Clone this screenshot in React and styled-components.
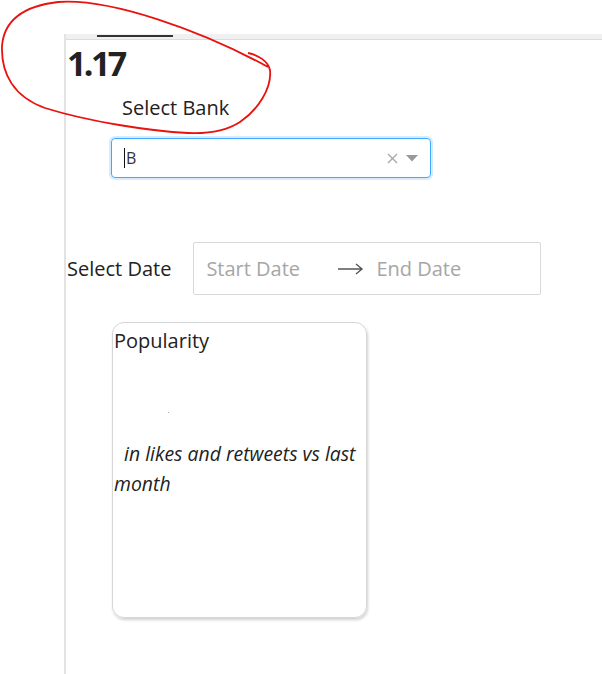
import React from "react";
import styled, { createGlobalStyle } from "styled-components";

const GlobalStyle = createGlobalStyle`
  html, body {
    margin: 0;
    padding: 0;
    background: #fff;
  }
  body {
    font-family: "Open Sans", "Noto Sans", sans-serif;
    color: #222;
  }
`;

const Page = styled.div`
  position: relative;
  padding: 34px 0 0 64px;
  min-height: 640px;
`;

const Main = styled.main`
  border-left: 2px solid #e3e3e3;
  min-height: 640px;
`;

const TopBand = styled.div`
  display: flex;
  height: 5px;
  background: #f0f0f0;
  border-bottom: 1px solid #dcdcdc;
`;

const TabMark = styled.div`
  margin-left: 31px;
  margin-top: 1px;
  width: 76px;
  height: 2px;
  background: #333;
`;

const Content = styled.div`
  padding: 0 0 0 1px;
`;

const Value = styled.h1`
  margin: 1px 0 0;
  font-size: 34px;
  font-weight: 700;
  letter-spacing: -2.6px;
  line-height: 44px;
  color: #222;
`;

const Label = styled.label`
  display: block;
  font-size: 20px;
  line-height: 28px;
  color: #222;
  margin: ${(p) => p.$margin || "0"};
`;

const SelectBox = styled.div`
  display: flex;
  align-items: center;
  width: 294px;
  height: 38px;
  margin: 16px 0 0 44px;
  padding: 0 12px;
  box-sizing: content-box;
  border: 1px solid #40a9ff;
  border-radius: 4px;
  box-shadow: 0 0 0 2px rgba(24, 144, 255, 0.18);
  font-size: 16px;
  color: #333;
`;

const Caret = styled.span`
  display: inline-block;
  width: 1px;
  height: 20px;
  background: #111;
  margin-right: 1px;
`;

const SelectValue = styled.span`
  flex: 1;
  display: flex;
  align-items: center;
  line-height: 20px;
`;

const IconSlot = styled.span`
  display: flex;
  align-items: center;
  margin-left: ${(p) => p.$gap || "0"};
`;

const DateRow = styled.div`
  display: flex;
  align-items: center;
  margin-top: 64px;
  gap: 22px;
`;

const RangePicker = styled.div`
  display: flex;
  align-items: center;
  width: 322px;
  height: 51px;
  padding: 0 12px;
  border: 1px solid #d9d9d9;
  border-radius: 2px;
  font-size: 20px;
  color: #a6a6a6;
`;

const Placeholder = styled.span`
  width: ${(p) => p.$w || "auto"};
`;

const Arrow = styled.span`
  display: flex;
  align-items: center;
  width: 38px;
  color: #555;
`;

const Card = styled.section`
  width: 252px;
  height: 290px;
  margin: 27px 0 0 45px;
  border: 1px solid #d6d6d6;
  border-radius: 12px;
  box-shadow: 1px 2px 3px rgba(0, 0, 0, 0.18);
  padding: 4px 0 0 1px;
  box-sizing: content-box;
`;

const CardTitle = styled.div`
  font-size: 20px;
  line-height: 28px;
  color: #222;
`;

const Dot = styled.div`
  width: 1px;
  height: 1px;
  margin: 57px 0 0 54px;
  background: #b9a79a;
`;

const Note = styled.p`
  margin: 26px 0 0;
  font-size: 19.4px;
  font-style: italic;
  line-height: 30px;
  color: #222;
  white-space: pre-wrap;
`;

const Scribble = styled.svg`
  position: absolute;
  left: 0;
  top: 0;
  pointer-events: none;
`;

export default function App() {
  return (
    <>
      <GlobalStyle />
      <Page>
        <Main>
          <TopBand>
            <TabMark />
          </TopBand>
          <Content>
            <Value>1.17</Value>
            <Label $margin="9px 0 0 55px">Select Bank</Label>
            <SelectBox>
              <SelectValue>
                <Caret />B
              </SelectValue>
              <IconSlot>
                <svg width="11" height="11" viewBox="0 0 11 11">
                  <path d="M1 1 L10 10 M10 1 L1 10" stroke="#a8a8a8" strokeWidth="1.4" />
                </svg>
              </IconSlot>
              <IconSlot $gap="8px">
                <svg width="12" height="7" viewBox="0 0 12 7">
                  <path d="M0 0 H12 L6 6.5 Z" fill="#999" />
                </svg>
              </IconSlot>
            </SelectBox>
            <DateRow>
              <Label>Select Date</Label>
              <RangePicker>
                <Placeholder $w="132px">Start Date</Placeholder>
                <Arrow>
                  <svg width="26" height="12" viewBox="0 0 26 12">
                    <path d="M0 6 H24 M18 1 L24 6 L18 11" stroke="#555" strokeWidth="1.4" fill="none" />
                  </svg>
                </Arrow>
                <Placeholder>End Date</Placeholder>
              </RangePicker>
            </DateRow>
            <Card>
              <CardTitle>Popularity</CardTitle>
              <Dot />
              <Note>{"  in likes and retweets vs last month"}</Note>
            </Card>
          </Content>
        </Main>
        <Scribble width="280" height="140" viewBox="0 0 280 140">
          <path
            d="M248 53 C258 55 268 61 270 70 C272 88 258 110 240 122 C226 131 210 134 188 133 C150 131 90 122 45 108 C14 97 1 74 2 46 C4 20 24 6 58 2 C110 -2 200 30 268 67"
            stroke="#e8130f"
            strokeWidth="1.8"
            fill="none"
          />
        </Scribble>
      </Page>
    </>
  );
}
